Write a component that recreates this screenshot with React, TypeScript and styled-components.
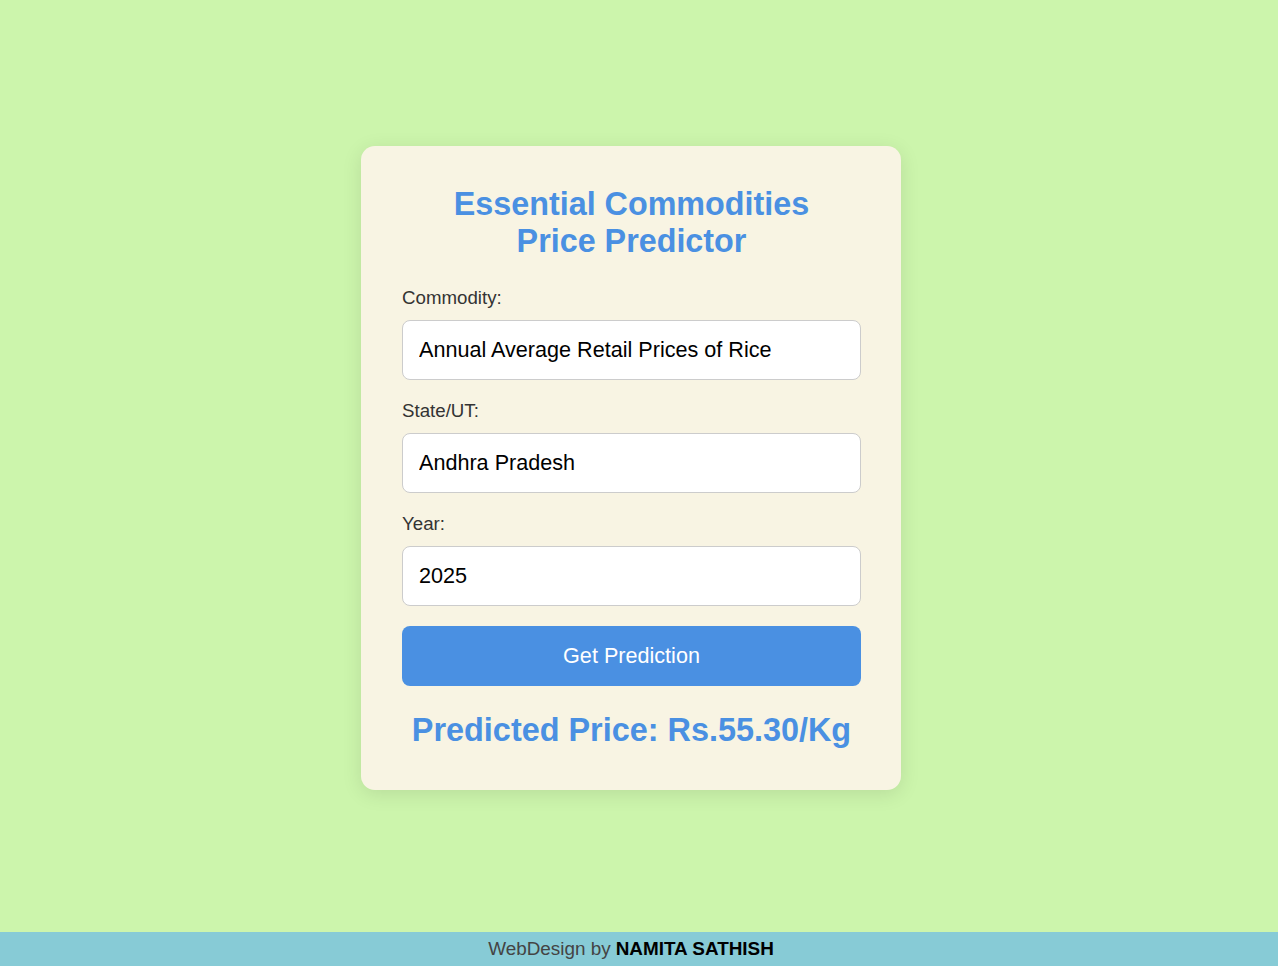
import React from "react";
import styled, { createGlobalStyle } from "styled-components";

const Global = createGlobalStyle`
  html, body { margin: 0; padding: 0; }
  body {
    background: #ccf5ac;
    font-family: "Liberation Sans", Arial, sans-serif;
  }
`;

const Page = styled.div`
  min-height: 100vh;
  display: flex;
  flex-direction: column;
`;

const Main = styled.main`
  flex: 1;
  display: flex;
  align-items: center;
  justify-content: center;
  padding: 3px 16px 0 0;
`;

const Card = styled.div`
  width: 540px;
  box-sizing: border-box;
  padding: 40px 40px 41px 41px;
  background: #f8f4e3;
  border-radius: 14px;
  box-shadow: 0 4px 20px rgba(0, 0, 0, 0.1);
  display: flex;
  flex-direction: column;
`;

const Title = styled.h1`
  margin: 0 0 27px;
  font-size: 32.3px;
  line-height: 37px;
  font-weight: 700;
  color: #4a90e2;
  text-align: center;
`;

const Label = styled.label`
  display: block;
  font-size: 18.7px;
  line-height: 22px;
  color: #333;
  margin-bottom: 11px;
`;

const Input = styled.input`
  box-sizing: border-box;
  width: 100%;
  height: 60px;
  padding: 0 16px;
  border: 1px solid #ccc;
  border-radius: 8px;
  background: #fff;
  font-family: "Liberation Sans", Arial, sans-serif;
  font-size: 21.6px;
  color: #000;
  margin-bottom: 20px;
  outline: none;
`;

const Button = styled.button`
  height: 60px;
  width: 100%;
  border: none;
  border-radius: 8px;
  background: #4a90e2;
  color: #fff;
  font-family: "Liberation Sans", Arial, sans-serif;
  font-size: 21.6px;
  cursor: pointer;
`;

const Result = styled.h2`
  margin: 26px 0 0;
  font-size: 32.4px;
  line-height: 37px;
  font-weight: 700;
  color: #4a90e2;
  text-align: center;
`;

const Footer = styled.footer`
  height: 34px;
  background: #87cbd6;
  display: flex;
  align-items: center;
  justify-content: center;
  padding-right: 16px;
  font-size: 18.9px;
  color: #444;
`;

const Name = styled.strong`
  color: #000;
  margin-left: 5px;
`;

export default function App() {
  return (
    <>
      <Global />
      <Page>
        <Main>
          <Card>
            <Title>
              Essential Commodities
              <br />
              Price Predictor
            </Title>
            <Label>Commodity:</Label>
            <Input readOnly value="Annual Average Retail Prices of Rice" />
            <Label>State/UT:</Label>
            <Input readOnly value="Andhra Pradesh" />
            <Label>Year:</Label>
            <Input readOnly value="2025" />
            <Button>Get Prediction</Button>
            <Result>Predicted Price: Rs.55.30/Kg</Result>
          </Card>
        </Main>
        <Footer>
          WebDesign by<Name>NAMITA SATHISH</Name>
        </Footer>
      </Page>
    </>
  );
}
